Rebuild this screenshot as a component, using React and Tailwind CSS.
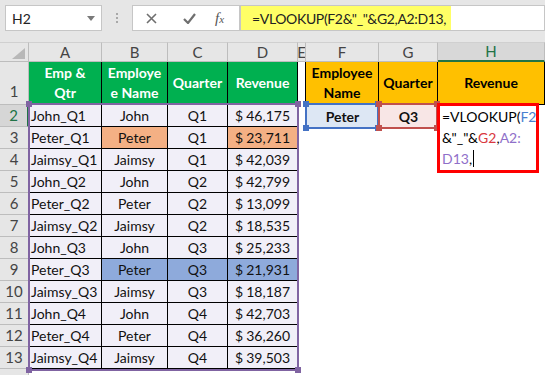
import React from 'react';

const ROWS = [
  ['John_Q1', 'John', 'Q1', '46,175'],
  ['Peter_Q1', 'Peter', 'Q1', '23,711'],
  ['Jaimsy_Q1', 'Jaimsy', 'Q1', '42,039'],
  ['John_Q2', 'John', 'Q2', '42,799'],
  ['Peter_Q2', 'Peter', 'Q2', '13,099'],
  ['Jaimsy_Q2', 'Jaimsy', 'Q2', '18,535'],
  ['John_Q3', 'John', 'Q3', '25,233'],
  ['Peter_Q3', 'Peter', 'Q3', '21,931'],
  ['Jaimsy_Q3', 'Jaimsy', 'Q3', '18,187'],
  ['John_Q4', 'John', 'Q4', '42,703'],
  ['Peter_Q4', 'Peter', 'Q4', '36,260'],
  ['Jaimsy_Q4', 'Jaimsy', 'Q4', '39,503'],
];

// fill per row: which of B, C, D are coloured
const fillFor = (i, col) => {
  if (i === 1 && (col === 1 || col === 3)) return 'bg-[#f4b084]';
  if (i === 7 && col >= 1) return 'bg-[#8eaadb]';
  return 'bg-[#f1eff8]';
};

const COLS = ['A', 'B', 'C', 'D', 'E', 'F', 'G', 'H'];

const Handle = ({ className }) => (
  <span className={`absolute w-[6px] h-[6px] ${className}`} />
);

const Toolbar = () => (
  <div className="h-[42px] bg-[#e6e6e6] flex items-start pt-[5px] pl-[5px] text-[14px] text-[#222]">
    {/* name box */}
    <div className="w-[97px] h-[26px] bg-white border border-[#c6c6c6] flex items-center justify-between pl-[6px] pr-[6px]">
      <span>H2</span>
      <svg width="8" height="5" viewBox="0 0 8 5"><path d="M0 0h8L4 5z" fill="#7a7a7a" /></svg>
    </div>
    <div className="w-[30px] h-[26px] flex flex-col items-center justify-center gap-[2px]">
      <span className="w-[2px] h-[2px] bg-[#a8a8a8]" />
      <span className="w-[2px] h-[2px] bg-[#a8a8a8]" />
      <span className="w-[2px] h-[2px] bg-[#a8a8a8]" />
    </div>
    {/* cancel / enter / fx */}
    <div className="w-[108px] h-[26px] bg-white border border-[#c6c6c6] flex items-center">
      <svg className="ml-[13px]" width="11" height="11" viewBox="0 0 11 11">
        <path d="M1 1l9 9M10 1l-9 9" stroke="#6f6f6f" strokeWidth="1.6" />
      </svg>
      <svg className="ml-[26px]" width="13" height="11" viewBox="0 0 13 11">
        <path d="M1 6l4 4 7-9" stroke="#6f6f6f" strokeWidth="2.2" fill="none" />
      </svg>
      <span className="ml-[19px] font-['Liberation_Serif',serif] italic text-[15px] text-[#555]">
        f<span className="text-[11px]">x</span>
      </span>
    </div>
    {/* formula */}
    <div className="flex-1 h-[26px] bg-white border border-[#c6c6c6] flex">
      <div className="w-[210px] h-full bg-[#ffff66] flex items-center pl-[11px] whitespace-nowrap tracking-[-0.35px]">
        =VLOOKUP(F2&amp;"_"&amp;G2,A2:D13,
      </div>
    </div>
  </div>
);

export default function App() {
  return (
    <div className="w-[545px] h-[375px] overflow-hidden bg-white font-['Lato',sans-serif]">
      <Toolbar />
      <div className="relative grid grid-cols-[29px_73px_66px_60px_70px_8px_73px_59px_107px] grid-rows-[20px_43px_repeat(12,22px)_6px] text-[14px] text-[#111]">
        {/* corner */}
        <div className="bg-[#e6e6e6] border-r border-b border-[#bdbdbd] border-t border-t-[#d0d0d0] flex items-end justify-end pr-[3px] pb-[2px]">
          <svg width="13" height="11" viewBox="0 0 13 11"><path d="M13 0v11H0z" fill="#b8b8b8" /></svg>
        </div>
        {COLS.map((c) => (
          <div
            key={c}
            className={
              c === 'H'
                ? 'bg-[#d8d8d8] border-t border-t-[#d0d0d0] border-r border-r-[#bdbdbd] border-b-2 border-b-[#217346] text-[#217346] text-[15px] flex items-center justify-center'
                : 'bg-[#e6e6e6] border-t border-t-[#d0d0d0] border-r border-b border-[#bdbdbd] text-[#444] text-[15px] flex items-center justify-center overflow-hidden'
            }
          >
            {c}
          </div>
        ))}

        {/* row 1 */}
        <div className="bg-[#e6e6e6] border-r border-b border-[#bdbdbd] text-[#444] text-[15px] flex items-end justify-center pb-[2px]">1</div>
        {[['Emp &', 'Qtr'], ['Employe', 'e Name'], ['Quarter'], ['Revenue']].map((t, i) => (
          <div key={i} className="bg-[#00b050] border-r border-b border-black text-white font-bold leading-[20px] flex flex-col items-center justify-center">
            {t.map((l) => <span key={l}>{l}</span>)}
          </div>
        ))}
        <div className="bg-white border-r border-black" />
        {[['Employee', 'Name'], ['Quarter'], ['Revenue']].map((t, i) => (
          <div key={i} className="bg-[#ffc000] border-r border-b border-black text-black font-bold leading-[20px] flex flex-col items-center justify-center">
            {t.map((l) => <span key={l}>{l}</span>)}
          </div>
        ))}

        {/* data rows */}
        {ROWS.map((r, i) => (
          <React.Fragment key={i}>
            <div
              className={
                i === 0
                  ? 'bg-[#d6d6d6] border-b border-b-[#bdbdbd] border-r-2 border-r-[#217346] text-[#217346] text-[15px] flex items-center justify-center'
                  : 'bg-[#e6e6e6] border-r border-b border-[#bdbdbd] text-[#444] text-[15px] flex items-center justify-center'
              }
            >
              {i + 2}
            </div>
            <div className={`${fillFor(i, 0)} border-r border-b border-black flex items-center pl-[2px] whitespace-nowrap overflow-hidden`}>{r[0]}</div>
            <div className={`${fillFor(i, 1)} border-r border-b border-black flex items-center justify-center`}>{r[1]}</div>
            <div className={`${fillFor(i, 2)} border-r border-b border-black flex items-center justify-center`}>{r[2]}</div>
            <div className={`${fillFor(i, 3)} border-r border-b border-black flex items-center justify-between px-[7px]`}>
              <span>$</span>
              <span>{r[3]}</span>
            </div>
            <div className="bg-white" />
            {i === 0 ? (
              <>
                <div className="bg-[#dde7f4] flex items-center justify-center font-bold">Peter</div>
                <div className="bg-[#f8e6e6] flex items-center justify-center font-bold">Q3</div>
                <div className="bg-white" />
              </>
            ) : (
              <>
                <div className="bg-white" />
                <div className="bg-white" />
                <div className="bg-white" />
              </>
            )}
          </React.Fragment>
        ))}
        {/* partial row 14 */}
        <div className="bg-[#e6e6e6] border-r border-[#bdbdbd]" />
        <div className="col-span-8 bg-white" />

        {/* A2:D13 reference highlight */}
        <div className="absolute left-[28px] top-[61px] w-[271px] h-[268px] border-2 border-[#8064a2] pointer-events-none">
          <Handle className="-left-[4px] -top-[4px] bg-[#8064a2]" />
          <Handle className="-right-[4px] -top-[4px] bg-[#8064a2]" />
          <Handle className="-left-[4px] -bottom-[4px] bg-[#8064a2]" />
          <Handle className="-right-[4px] -bottom-[4px] bg-[#8064a2]" />
        </div>
        {/* F2 reference */}
        <div className="absolute left-[305px] top-[61px] w-[74px] h-[26px] border-2 border-[#4472c4]">
          <Handle className="-left-[4px] -top-[4px] bg-[#4472c4]" />
          <Handle className="-right-[4px] -top-[4px] bg-[#4472c4]" />
          <Handle className="-left-[4px] -bottom-[4px] bg-[#4472c4]" />
          <Handle className="-right-[4px] -bottom-[4px] bg-[#4472c4]" />
        </div>
        {/* G2 reference */}
        <div className="absolute left-[378px] top-[61px] w-[60px] h-[26px] border-2 border-[#c0504d]">
          <Handle className="-left-[4px] -top-[4px] bg-[#c0504d]" />
          <Handle className="-right-[4px] -top-[4px] bg-[#c0504d]" />
          <Handle className="-left-[4px] -bottom-[4px] bg-[#c0504d]" />
          <Handle className="-right-[4px] -bottom-[4px] bg-[#c0504d]" />
        </div>
        {/* H2 editing */}
        <div className="absolute left-[437px] top-[61px] w-[102px] h-[70px] border-[3px] border-[#ff0000] bg-white pl-[2px] text-[14px] leading-[21px] text-black">
          <div className="whitespace-nowrap">=VLOOKUP(<span className="text-[#4a7fd0]">F2</span></div>
          <div className="whitespace-nowrap">&amp;"_"&amp;<span className="text-[#d9383f]">G2</span>,<span className="text-[#8f6fc9]">A2:</span></div>
          <div className="whitespace-nowrap flex items-center">
            <span className="text-[#8f6fc9]">D13</span>,<span className="inline-block w-[1px] h-[17px] bg-black ml-[1px]" />
          </div>
        </div>
      </div>
    </div>
  );
}
